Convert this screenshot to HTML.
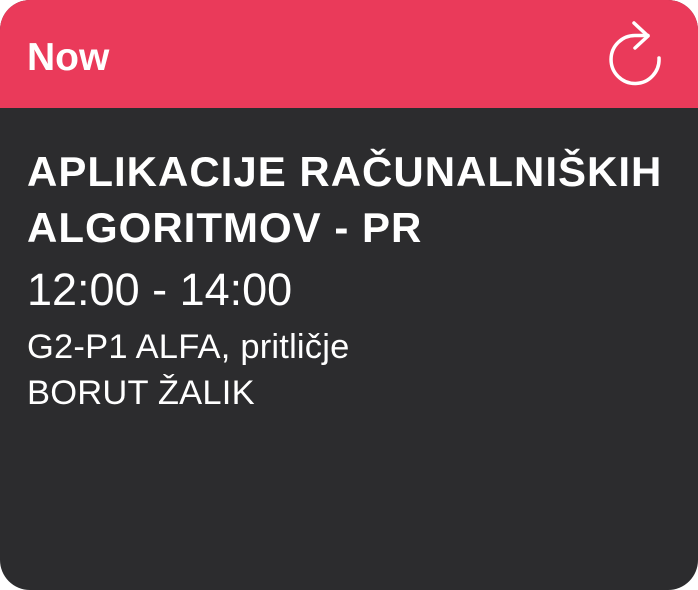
<!DOCTYPE html>
<html><head><meta charset="utf-8"><style>
html,body{margin:0;padding:0;background:#fff;}
.card{position:absolute;left:0;top:0;width:698px;height:590px;border-radius:30px;overflow:hidden;background:#2c2c2e;font-family:"Liberation Sans",sans-serif;color:#fff;}
.hdr{position:absolute;left:0;top:0;width:698px;height:108px;background:#ea3a5a;}
.now{position:absolute;left:27px;top:38px;font-size:39px;font-weight:bold;line-height:40px;}
.t{position:absolute;left:27px;white-space:nowrap;}
</style></head><body>
<div class="card">
<div class="hdr">
<div class="now">Now</div>
<svg style="position:absolute;left:0;top:0" width="698" height="108">
<path d="M659 58 A24 24 0 1 1 636 35.5 L648 35.5" fill="none" stroke="#fff" stroke-width="3.5" stroke-linecap="round"/>
<path d="M634 23 L648 36 L635 48" fill="none" stroke="#fff" stroke-width="3.5" stroke-linecap="round" stroke-linejoin="round"/>
</svg>
</div>
<div class="t" style="top:144px;font-size:42px;font-weight:bold;line-height:56px;letter-spacing:1px;">APLIKACIJE RAČUNALNIŠKIH<br>ALGORITMOV - PR</div>
<div class="t" style="top:266px;font-size:45px;line-height:48px;">12:00 - 14:00</div>
<div class="t" style="top:324px;font-size:34.5px;line-height:46px;letter-spacing:0.2px;">G2-P1 ALFA, pritličje<br>BORUT ŽALIK</div>
</div>
</body></html>
